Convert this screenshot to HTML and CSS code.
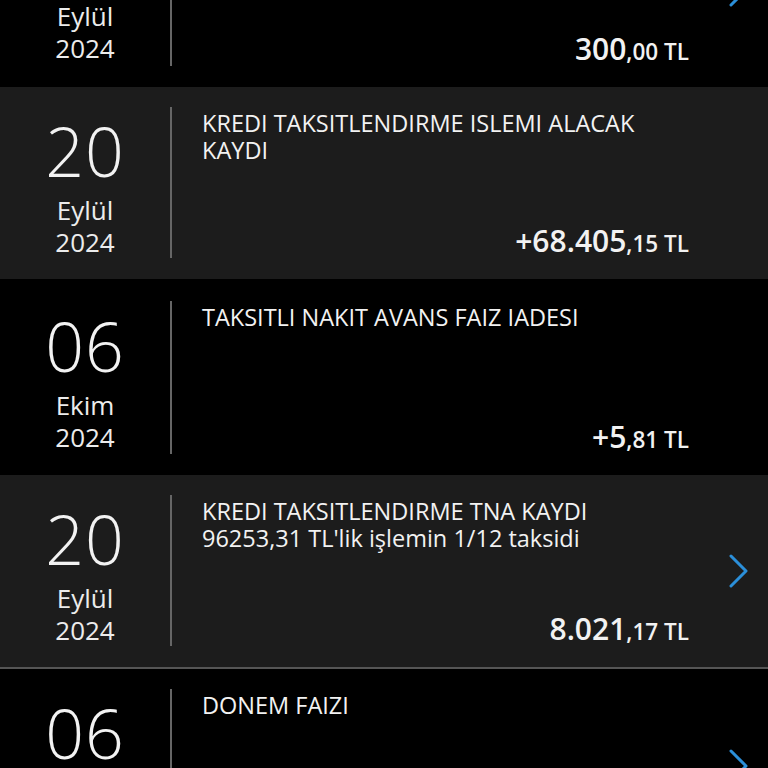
FILE: index.html
```html
<!DOCTYPE html>
<html lang="tr">
<head>
<meta charset="utf-8">
<link rel="stylesheet" href="styles.css">
</head>
<body>
<div class="viewport">
<div class="list">
  <div class="row dark">
    <div class="date">
      <div class="day">20</div>
      <div class="month">Eylül</div>
      <div class="year">2024</div>
    </div>
    <div class="content">
      <div class="title">KREDI KARTI ODEMESI</div>
      <div class="amount"><span class="int">300</span><span class="dec">,00</span><span class="cur"> TL</span></div>
    </div>
    <div class="arrow"><svg viewBox="0 0 20 34" width="20" height="34"><path d="M2 2 L17 17 L2 32" fill="none" stroke="#2b8fd9" stroke-width="3" stroke-linecap="round" stroke-linejoin="round"/></svg></div>
  </div>

  <div class="row gray short">
    <div class="date">
      <div class="day">20</div>
      <div class="month">Eylül</div>
      <div class="year">2024</div>
    </div>
    <div class="content">
      <div class="title">KREDI TAKSITLENDIRME ISLEMI ALACAK KAYDI</div>
      <div class="amount"><span class="int">+68.405</span><span class="dec">,15</span><span class="cur"> TL</span></div>
    </div>
    <div class="arrow"></div>
  </div>

  <div class="row dark tall">
    <div class="date">
      <div class="day">06</div>
      <div class="month">Ekim</div>
      <div class="year">2024</div>
    </div>
    <div class="content">
      <div class="title">TAKSITLI NAKIT AVANS FAIZ IADESI</div>
      <div class="amount"><span class="int">+5</span><span class="dec">,81</span><span class="cur"> TL</span></div>
    </div>
    <div class="arrow"></div>
  </div>

  <div class="row gray sep">
    <div class="date">
      <div class="day">20</div>
      <div class="month">Eylül</div>
      <div class="year">2024</div>
    </div>
    <div class="content">
      <div class="title">KREDI TAKSITLENDIRME TNA KAYDI<br>96253,31 TL'lik işlemin 1/12 taksidi</div>
      <div class="amount"><span class="int">8.021</span><span class="dec">,17</span><span class="cur"> TL</span></div>
    </div>
    <div class="arrow"><svg viewBox="0 0 20 34" width="20" height="34"><path d="M2 2 L17 17 L2 32" fill="none" stroke="#2b8fd9" stroke-width="3" stroke-linecap="round" stroke-linejoin="round"/></svg></div>
  </div>

  <div class="row dark">
    <div class="date">
      <div class="day">06</div>
      <div class="month">Ekim</div>
      <div class="year">2024</div>
    </div>
    <div class="content">
      <div class="title">DONEM FAIZI</div>
      <div class="amount"><span class="int">120</span><span class="dec">,45</span><span class="cur"> TL</span></div>
    </div>
    <div class="arrow"><svg viewBox="0 0 20 34" width="20" height="34"><path d="M2 2 L17 17 L2 32" fill="none" stroke="#2b8fd9" stroke-width="3" stroke-linecap="round" stroke-linejoin="round"/></svg></div>
  </div>
</div>
</div>
</body>
</html>
```
FILE: styles.css
```css
html, body {
  margin: 0;
  padding: 0;
  background: #000;
}
body {
  font-family: "Open Sans", "Noto Sans", sans-serif;
  color: #f2f2f2;
}
.viewport {
  width: 768px;
  height: 768px;
  overflow: hidden;
}
.list {
  display: flex;
  flex-direction: column;
  margin-top: -107px;
}
.row {
  display: flex;
  height: 194px;
  box-sizing: border-box;
  flex-shrink: 0;
}
.row.short { height: 192px; }
.row.tall { height: 196px; }
.row.dark { background: #000; }
.row.gray { background: #1c1c1c; }
.row.sep { border-bottom: 2px solid #555; }
.date {
  width: 170px;
  flex-shrink: 0;
  display: flex;
  flex-direction: column;
  align-items: center;
  padding-top: 24px;
  box-sizing: border-box;
}
.row.tall .date { padding-top: 27px; }
.day {
  font-size: 68px;
  font-weight: 300;
  line-height: 80px;
  letter-spacing: 1px;
}
.month, .year {
  font-size: 26px;
  font-weight: 400;
  line-height: 32px;
  color: #ececec;
}
.month { margin-top: 3px; }
.content {
  flex: 1;
  margin: 20px 0 21px 0;
  border-left: 2px solid #666;
  padding: 3px 0 0 30px;
  display: flex;
  flex-direction: column;
  justify-content: space-between;
}
.row.tall .content { margin-top: 22px; padding-top: 3px; }
.title {
  font-size: 23.5px;
  line-height: 27px;
  font-weight: 400;
}
.amount {
  text-align: right;
  font-weight: 600;
  line-height: 32px;
  margin-bottom: -4px;
}
.amount .int { font-size: 30px; }
.amount .dec, .amount .cur { font-size: 22.5px; }
.arrow {
  width: 79px;
  flex-shrink: 0;
  display: flex;
  align-items: center;
  justify-content: flex-start;
  padding-left: 40px;
  box-sizing: border-box;
}
.arrow svg { display: block; }
```
